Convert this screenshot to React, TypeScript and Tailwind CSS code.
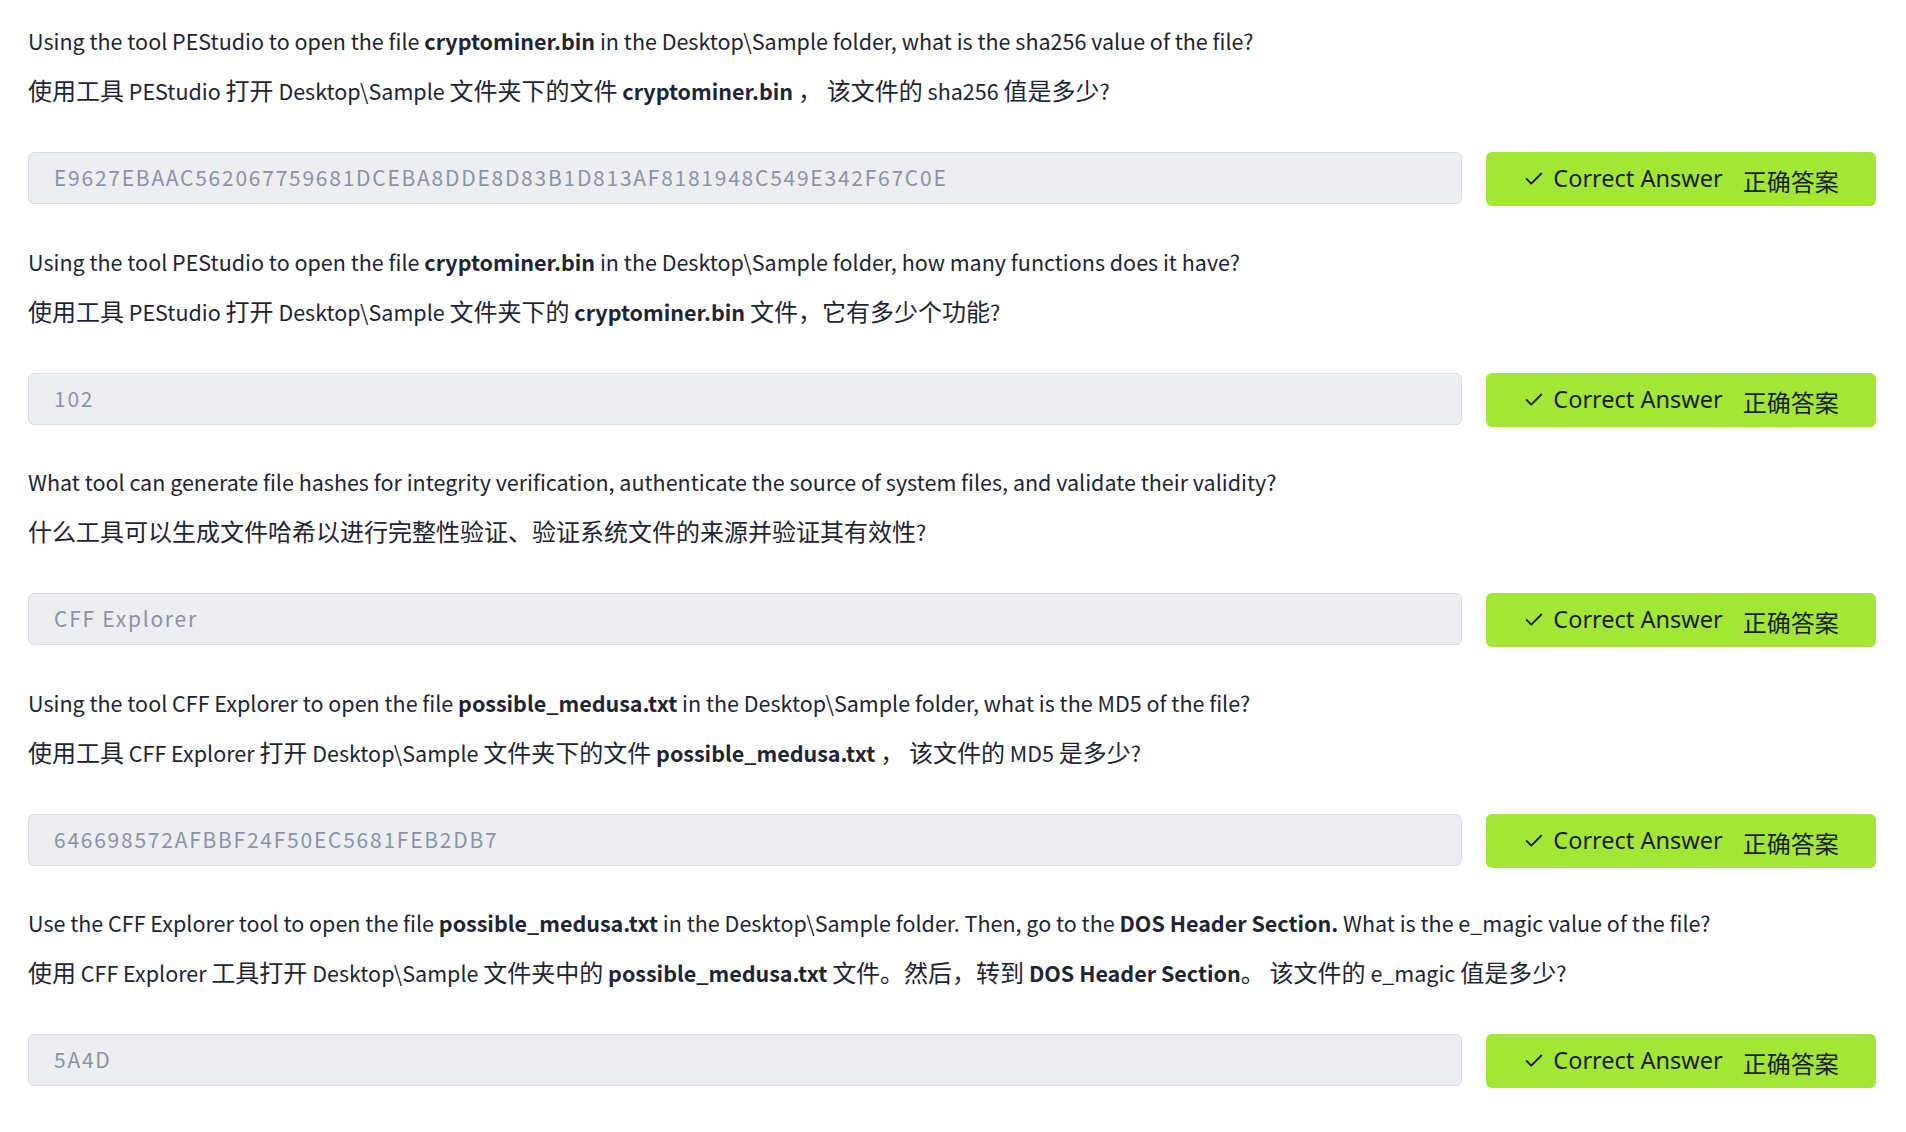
import { Check } from 'lucide-react';
import type { ReactNode } from 'react';

type Question = { en: ReactNode; zh: ReactNode; answer: string };

const B = ({ children }: { children: ReactNode }) => <span className="font-bold">{children}</span>;

// CJK glyphs sit a bit larger than the Latin text in the reference, so wrap CJK runs
function Z({ t }: { t: string }) {
  const parts = t.split(/([\u3000-\u303f\u4e00-\u9fff\uff00-\uffef]+)/);
  return (
    <>
      {parts.map((p, i) =>
        i % 2 === 1 ? (
          <span key={i} className="text-[24px]">
            {p}
          </span>
        ) : (
          p
        ),
      )}
    </>
  );
}

const questions: Question[] = [
  {
    en: <>Using the tool PEStudio to open the file <B>cryptominer.bin</B> in the Desktop\Sample folder, what is the sha256 value of the file?</>,
    zh: <><Z t="使用工具 PEStudio 打开 Desktop\Sample 文件夹下的文件 " /><B>cryptominer.bin</B><Z t=" ， 该文件的 sha256 值是多少?" /></>,
    answer: 'E9627EBAAC562067759681DCEBA8DDE8D83B1D813AF8181948C549E342F67C0E',
  },
  {
    en: <>Using the tool PEStudio to open the file <B>cryptominer.bin</B> in the Desktop\Sample folder, how many functions does it have?</>,
    zh: <><Z t="使用工具 PEStudio 打开 Desktop\Sample 文件夹下的 " /><B>cryptominer.bin</B><Z t=" 文件，它有多少个功能?" /></>,
    answer: '102',
  },
  {
    en: <>What tool can generate file hashes for integrity verification, authenticate the source of system files, and validate their validity?</>,
    zh: <Z t="什么工具可以生成文件哈希以进行完整性验证、验证系统文件的来源并验证其有效性?" />,
    answer: 'CFF Explorer',
  },
  {
    en: <>Using the tool CFF Explorer to open the file <B>possible_medusa.txt</B> in the Desktop\Sample folder, what is the MD5 of the file?</>,
    zh: <><Z t="使用工具 CFF Explorer 打开 Desktop\Sample 文件夹下的文件 " /><B>possible_medusa.txt</B><Z t=" ， 该文件的 MD5 是多少?" /></>,
    answer: '646698572AFBBF24F50EC5681FEB2DB7',
  },
  {
    en: <>Use the CFF Explorer tool to open the file <B>possible_medusa.txt</B> in the Desktop\Sample folder. Then, go to the <B>DOS Header Section.</B> What is the e_magic value of the file?</>,
    zh: <><Z t="使用 CFF Explorer 工具打开 Desktop\Sample 文件夹中的 " /><B>possible_medusa.txt</B><Z t=" 文件。然后，转到 " /><B>DOS Header Section</B><Z t="。 该文件的 e_magic 值是多少?" /></>,
    answer: '5A4D',
  },
];

function AnswerRow({ q }: { q: Question }) {
  return (
    <section className="flex flex-col">
      <p className="text-[21.5px] leading-9 text-[#1f2433]">{q.en}</p>
      <p className="mt-[13px] text-[21.5px] leading-9 text-[#1f2433]">{q.zh}</p>
      <div className="mt-[43px] flex items-start gap-6">
        <div className="flex h-[52px] flex-1 items-center rounded-md border border-[#d9dce3] bg-[#eceef2] pl-[25px] text-[21px] tracking-[1.75px] text-[#8b93a7]">
          {q.answer}
        </div>
        <button className="flex h-[54px] w-[390px] items-center justify-center rounded-md bg-[#a3e635] text-[#1c1d2a] [font-family:'Noto_Sans','Noto_Sans_CJK_SC',sans-serif]">
          <Check size={22} strokeWidth={2} className="mr-[8px]" />
          <span className="text-[23.5px]">Correct Answer</span>
          <span className="ml-[20px] mt-[4px] text-[24px] [font-family:'Noto_Sans_CJK_SC',sans-serif]">正确答案</span>
        </button>
      </div>
    </section>
  );
}

export default function App() {
  return (
    <div className="min-h-screen bg-white pl-[28px] pr-[30px] pt-[23px] [font-family:'Noto_Sans_CJK_SC','Noto_Sans',sans-serif]">
      <div className="flex flex-col gap-[37.5px]">
        {questions.map((q, i) => (
          <AnswerRow key={i} q={q} />
        ))}
      </div>
    </div>
  );
}
